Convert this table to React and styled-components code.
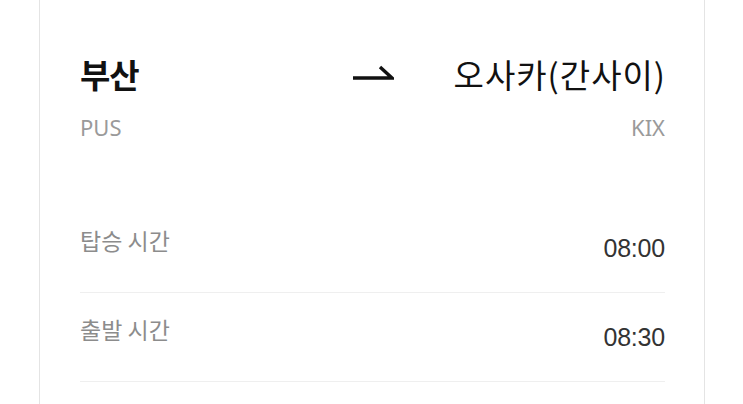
import React from "react";
import styled, { createGlobalStyle } from "styled-components";

const Global = createGlobalStyle`
  html, body { margin: 0; padding: 0; background: #ffffff; }
  body { font-family: "Noto Sans CJK KR", "Noto Sans", sans-serif; }
`;

const Page = styled.div`
  padding: 0 38px 0 39px;
  background: #ffffff;
`;

const Card = styled.section`
  border: 1px solid #e4e4e4;
  border-top: 0;
  background: #fff;
  padding: 52px 39px 40px 40px;
  min-height: 500px;
`;

const RouteRow = styled.div`
  display: grid;
  grid-template-columns: 1fr auto 1fr;
  align-items: center;
`;

const City = styled.div`
  font-size: 33px;
  line-height: 44px;
  font-weight: ${(p) => (p.$bold ? 700 : 400)};
  color: #111;
  text-align: ${(p) => p.$align};
  letter-spacing: ${(p) => (p.$bold ? "-1px" : "1px")};
  margin-right: ${(p) => (p.$bold ? "0" : "-1px")};
`;

const ArrowBox = styled.div`
  width: 42px;
  height: 44px;
  display: flex;
  align-items: center;
  justify-content: center;
`;

const CodeRow = styled.div`
  display: flex;
  justify-content: space-between;
  margin-top: 16px;
`;

const Code = styled.span`
  font-family: "Noto Sans", "Open Sans", sans-serif;
  font-size: 22px;
  line-height: 30px;
  color: #9a9a9a;
`;

const List = styled.div`
  margin-top: 62px;
`;

const InfoRow = styled.div`
  height: 88px;
  display: flex;
  align-items: center;
  justify-content: space-between;
  border-bottom: 1px solid #efefef;
`;

const Label = styled.span`
  font-size: 23px;
  line-height: 30px;
  color: #8c8c8c;
  padding-bottom: 16px;
`;

const Value = styled.span`
  font-family: "Liberation Sans", "Noto Sans", sans-serif;
  font-size: 25px;
  line-height: 30px;
  color: #333;
  letter-spacing: -0.2px;
`;

const Harpoon = () => (
  <svg width="42" height="20" viewBox="0 0 42 20">
    <path
      d="M1 14 H40 L28 3"
      fill="none"
      stroke="#111"
      strokeWidth="3.4"
      strokeLinecap="butt"
      strokeLinejoin="miter"
    />
  </svg>
);

const rows = [
  { label: "탑승 시간", value: "08:00" },
  { label: "출발 시간", value: "08:30" },
];

export default function App() {
  return (
    <>
      <Global />
      <Page>
        <Card>
          <RouteRow>
            <City $bold $align="left">부산</City>
            <ArrowBox>
              <Harpoon />
            </ArrowBox>
            <City $align="right">오사카(간사이)</City>
          </RouteRow>
          <CodeRow>
            <Code>PUS</Code>
            <Code>KIX</Code>
          </CodeRow>
          <List>
            {rows.map((r) => (
              <InfoRow key={r.label}>
                <Label>{r.label}</Label>
                <Value>{r.value}</Value>
              </InfoRow>
            ))}
          </List>
        </Card>
      </Page>
    </>
  );
}
